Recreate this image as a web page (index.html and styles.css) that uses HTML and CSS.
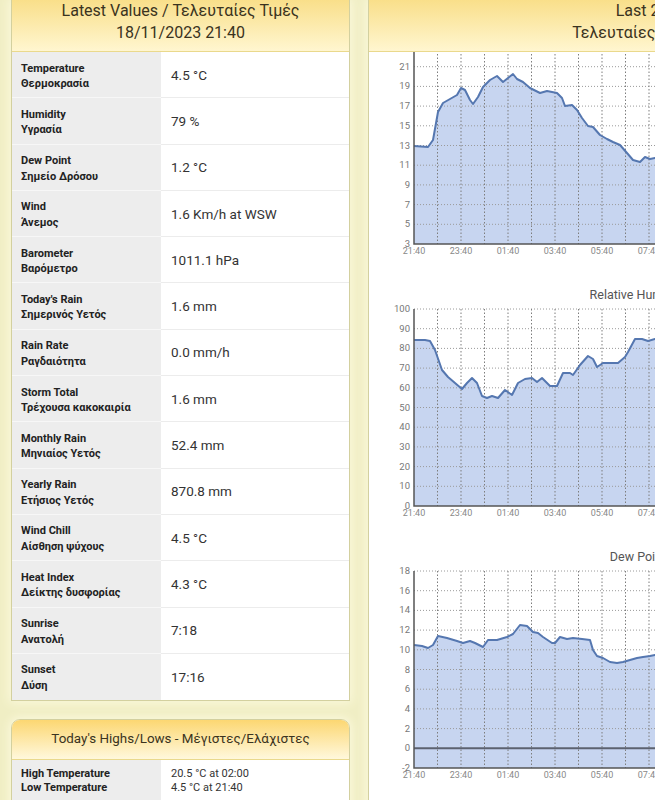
FILE: index.html
```html
<!DOCTYPE html>
<html lang="el">
<head>
<meta charset="utf-8">
<title>Weather</title>
<link rel="stylesheet" href="styles.css">
</head>
<body>
<div class="page">
  <div class="left">
    <section class="panel current">
      <header class="head head-tall">Latest Values / Τελευταίες Τιμές<br>18/11/2023 21:40</header>
      <div class="row"><div class="lbl">Temperature<br>Θερμοκρασία</div><div class="val">4.5 °C</div></div>
      <div class="row"><div class="lbl">Humidity<br>Υγρασία</div><div class="val">79 %</div></div>
      <div class="row"><div class="lbl">Dew Point<br>Σημείο Δρόσου</div><div class="val">1.2 °C</div></div>
      <div class="row"><div class="lbl">Wind<br>Άνεμος</div><div class="val">1.6 Km/h at WSW</div></div>
      <div class="row"><div class="lbl">Barometer<br>Βαρόμετρο</div><div class="val">1011.1 hPa</div></div>
      <div class="row"><div class="lbl">Today's Rain<br>Σημερινός Υετός</div><div class="val">1.6 mm</div></div>
      <div class="row"><div class="lbl">Rain Rate<br>Ραγδαιότητα</div><div class="val">0.0 mm/h</div></div>
      <div class="row"><div class="lbl">Storm Total<br>Τρέχουσα κακοκαιρία</div><div class="val">1.6 mm</div></div>
      <div class="row"><div class="lbl">Monthly Rain<br>Μηνιαίος Υετός</div><div class="val">52.4 mm</div></div>
      <div class="row"><div class="lbl">Yearly Rain<br>Ετήσιος Υετός</div><div class="val">870.8 mm</div></div>
      <div class="row"><div class="lbl">Wind Chill<br>Αίσθηση ψύχους</div><div class="val">4.5 °C</div></div>
      <div class="row"><div class="lbl">Heat Index<br>Δείκτης δυσφορίας</div><div class="val">4.3 °C</div></div>
      <div class="row"><div class="lbl">Sunrise<br>Ανατολή</div><div class="val">7:18</div></div>
      <div class="row last"><div class="lbl">Sunset<br>Δύση</div><div class="val">17:16</div></div>
    </section>
    <section class="panel highs">
      <header class="head head-small">Today's Highs/Lows - Μέγιστες/Ελάχιστες</header>
      <div class="row row-small"><div class="lbl">High Temperature<br>Low Temperature</div><div class="val">20.5 °C at 02:00<br>4.5 °C at 21:40</div></div>
      <div class="row row-small"><div class="lbl">High Humidity<br>Low Humidity</div><div class="val">85 % at 21:50<br>55 % at 01:10</div></div>
    </section>
  </div>

  <section class="panel charts">
    <header class="head head-tall">Last 24h<br>Τελευταίες 24 ώρες</header>
    <div class="chart-list">
      <svg class="chart chart-first" viewBox="0 44 540 218" width="540" height="218">
        <text class="title" x="270" y="29">Temperature</text>
        <polygon class="area" points="46,236 46,138 60,139 65,132 70,104 75,95 82,91 89,87 93,80 97,82 102,92 105,96 110,89 115,79 122,72 129,68 135,74 140,70 145,66 149,71 155,74 162,80 172,85 179,83 189,85 194,90 197,98 204,97 209,102 214,110 220,118 225,119 232,127 239,131 245,134 252,137 259,145 265,152 272,154 277,149 282,151 287,150 300,152 315,150 330,156 345,160 360,158 380,162 400,165 420,170 440,172 460,175 480,178 500,180 516,182 516,236"/>
        <path class="hgrid" d="M46 39H540M46 58.7H540M46 78.4H540M46 98.1H540M46 117.8H540M46 137.5H540M46 157.2H540M46 176.9H540M46 196.6H540M46 216.3H540"/>
        <path class="vgrid" d="M69.5 39V236M93 39V236M116.5 39V236M140 39V236M163.5 39V236M187 39V236M210.5 39V236M234 39V236M257.5 39V236M281 39V236M304.5 39V236M328 39V236M351.5 39V236M375 39V236M398.5 39V236M422 39V236M445.5 39V236M469 39V236M492.5 39V236M516 39V236"/>
        <polyline class="line" points="46,138 60,139 65,132 70,104 75,95 82,91 89,87 93,80 97,82 102,92 105,96 110,89 115,79 122,72 129,68 135,74 140,70 145,66 149,71 155,74 162,80 172,85 179,83 189,85 194,90 197,98 204,97 209,102 214,110 220,118 225,119 232,127 239,131 245,134 252,137 259,145 265,152 272,154 277,149 282,151 287,150 300,152 315,150 330,156 345,160 360,158 380,162 400,165 420,170 440,172 460,175 480,178 500,180 516,182"/>
        <path class="axis" d="M46 39V236H540"/>
        <g class="ylab">
          <text x="42" y="239">3</text><text x="42" y="219.3">5</text><text x="42" y="199.6">7</text><text x="42" y="179.9">9</text><text x="42" y="160.2">11</text><text x="42" y="140.5">13</text><text x="42" y="120.8">15</text><text x="42" y="101.1">17</text><text x="42" y="81.4">19</text><text x="42" y="61.7">21</text><text x="42" y="42">23</text>
        </g>
        <g class="xlab">
          <text x="46" y="246">21:40</text><text x="93" y="246">23:40</text><text x="140" y="246">01:40</text><text x="187" y="246">03:40</text><text x="234" y="246">05:40</text><text x="281" y="246">07:40</text><text x="328" y="246">09:40</text><text x="375" y="246">11:40</text><text x="422" y="246">13:40</text><text x="469" y="246">15:40</text><text x="516" y="246">17:40</text>
        </g>
      </svg>

      <svg class="chart" viewBox="0 0 540 262" width="540" height="262">
        <text class="title" x="270" y="29">Relative Humidity</text>
        <polygon class="area" points="46,236 46,70 57,70 62,71 67,80 74,100 80,107 87,113 94,119 99,113 104,108 109,113 114,126 119,128 124,126 130,128 137,120 144,125 150,113 157,109 164,108 169,112 174,108 182,116 189,116 195,103 202,103 205,105 212,95 220,86 225,89 229,97 235,93 244,93 250,93 257,87 260,82 267,69 274,69 280,71 287,69 300,70 320,72 340,75 360,78 380,80 400,82 420,84 440,86 460,88 480,90 500,92 516,93 516,236"/>
        <path class="hgrid" d="M46 39H540M46 58.7H540M46 78.4H540M46 98.1H540M46 117.8H540M46 137.5H540M46 157.2H540M46 176.9H540M46 196.6H540M46 216.3H540"/>
        <path class="vgrid" d="M69.5 39V236M93 39V236M116.5 39V236M140 39V236M163.5 39V236M187 39V236M210.5 39V236M234 39V236M257.5 39V236M281 39V236M304.5 39V236M328 39V236M351.5 39V236M375 39V236M398.5 39V236M422 39V236M445.5 39V236M469 39V236M492.5 39V236M516 39V236"/>
        <polyline class="line" points="46,70 57,70 62,71 67,80 74,100 80,107 87,113 94,119 99,113 104,108 109,113 114,126 119,128 124,126 130,128 137,120 144,125 150,113 157,109 164,108 169,112 174,108 182,116 189,116 195,103 202,103 205,105 212,95 220,86 225,89 229,97 235,93 244,93 250,93 257,87 260,82 267,69 274,69 280,71 287,69 300,70 320,72 340,75 360,78 380,80 400,82 420,84 440,86 460,88 480,90 500,92 516,93"/>
        <path class="axis" d="M46 39V236H540"/>
        <g class="ylab">
          <text x="42" y="239">0</text><text x="42" y="219.3">10</text><text x="42" y="199.6">20</text><text x="42" y="179.9">30</text><text x="42" y="160.2">40</text><text x="42" y="140.5">50</text><text x="42" y="120.8">60</text><text x="42" y="101.1">70</text><text x="42" y="81.4">80</text><text x="42" y="61.7">90</text><text x="42" y="42">100</text>
        </g>
        <g class="xlab">
          <text x="46" y="246">21:40</text><text x="93" y="246">23:40</text><text x="140" y="246">01:40</text><text x="187" y="246">03:40</text><text x="234" y="246">05:40</text><text x="281" y="246">07:40</text><text x="328" y="246">09:40</text><text x="375" y="246">11:40</text><text x="422" y="246">13:40</text><text x="469" y="246">15:40</text><text x="516" y="246">17:40</text>
        </g>
      </svg>

      <svg class="chart" viewBox="0 0 540 262" width="540" height="262">
        <text class="title" x="270" y="29">Dew Point</text>
        <polygon class="area" points="46,236 46,113 54,114 60,116 65,113 70,104 79,106 89,109 95,111 102,109 107,111 115,115 120,108 129,108 139,105 145,102 152,93 159,94 165,100 170,101 175,105 184,111 187,111 192,105 199,107 205,106 214,107 222,108 225,118 229,124 235,126 242,130 249,131 255,130 262,128 269,126 275,125 282,124 287,123 300,122 320,124 340,126 360,128 380,130 400,133 420,135 440,138 460,140 480,142 500,144 516,145 516,236"/>
        <path class="hgrid" d="M46 39H540M46 58.7H540M46 78.4H540M46 98.1H540M46 117.8H540M46 137.5H540M46 157.2H540M46 176.9H540M46 196.6H540"/>
        <path class="vgrid" d="M69.5 39V236M93 39V236M116.5 39V236M140 39V236M163.5 39V236M187 39V236M210.5 39V236M234 39V236M257.5 39V236M281 39V236M304.5 39V236M328 39V236M351.5 39V236M375 39V236M398.5 39V236M422 39V236M445.5 39V236M469 39V236M492.5 39V236M516 39V236"/>
        <path class="zero" d="M46 216.3H540"/>
        <polyline class="line" points="46,113 54,114 60,116 65,113 70,104 79,106 89,109 95,111 102,109 107,111 115,115 120,108 129,108 139,105 145,102 152,93 159,94 165,100 170,101 175,105 184,111 187,111 192,105 199,107 205,106 214,107 222,108 225,118 229,124 235,126 242,130 249,131 255,130 262,128 269,126 275,125 282,124 287,123 300,122 320,124 340,126 360,128 380,130 400,133 420,135 440,138 460,140 480,142 500,144 516,145"/>
        <path class="axis" d="M46 39V236H540"/>
        <g class="ylab">
          <text x="42" y="239">-2</text><text x="42" y="219.3">0</text><text x="42" y="199.6">2</text><text x="42" y="179.9">4</text><text x="42" y="160.2">6</text><text x="42" y="140.5">8</text><text x="42" y="120.8">10</text><text x="42" y="101.1">12</text><text x="42" y="81.4">14</text><text x="42" y="61.7">16</text><text x="42" y="42">18</text>
        </g>
        <g class="xlab">
          <text x="46" y="246">21:40</text><text x="93" y="246">23:40</text><text x="140" y="246">01:40</text><text x="187" y="246">03:40</text><text x="234" y="246">05:40</text><text x="281" y="246">07:40</text><text x="328" y="246">09:40</text><text x="375" y="246">11:40</text><text x="422" y="246">13:40</text><text x="469" y="246">15:40</text><text x="516" y="246">17:40</text>
        </g>
      </svg>
    </div>
  </section>
</div>
</body>
</html>
```

FILE: styles.css
```css
* { box-sizing: border-box; }
html, body {
  margin: 0;
  padding: 0;
  overflow: hidden;
}
body {
  background: #f0eec4;
  font-family: Roboto, "Noto Sans", "DejaVu Sans", sans-serif;
  color: #333;
}
.page {
  width: 655px;
  height: 800px;
  overflow: hidden;
  display: flex;
  align-items: flex-start;
  gap: 18px;
  padding-left: 11px;
}
.left {
  flex: none;
  width: 339px;
  display: flex;
  flex-direction: column;
  gap: 18px;
}
.panel {
  background: #fff;
  border: 1px solid #d3d09f;
  box-shadow: 0 0 10px 2px #fbf9dc;
}
.current {
  border-top: none;
}
.head {
  text-align: center;
  color: #3a3320;
  border-bottom: 1px solid #ead98c;
}
.head-tall {
  height: 52px;
  padding-top: 0;
  font-size: 16px;
  line-height: 21.5px;
  background: linear-gradient(#f9df8a, #fff6d0);
}
.head-small {
  height: 40px;
  padding-top: 10px;
  font-size: 13.4px;
  line-height: 17px;
  background: linear-gradient(#fcd772, #fff8dc);
}
.highs {
  border-radius: 9px 9px 0 0;
}
.highs .head {
  border-radius: 8px 8px 0 0;
}
.row {
  display: grid;
  grid-template-columns: 149px 1fr;
  height: 46.3px;
}
.lbl {
  background: #ededed;
  padding: 8.5px 9px 0;
  font-size: 11px;
  font-weight: bold;
  line-height: 15.5px;
  color: #222;
  border-bottom: 1px solid #f7f7f7;
}
.val {
  padding-left: 10px;
  display: flex;
  align-items: center;
  font-size: 13.5px;
  color: #333;
  border-bottom: 1px solid #ececec;
}
.row.last .lbl, .row.last .val {
  border-bottom: none;
}
.row-small {
  height: auto;
}
.row-small .lbl {
  padding: 7px 9px 8px;
  font-size: 11px;
  line-height: 14px;
}
.row-small .val {
  display: block;
  padding: 7px 10px 8px;
  font-size: 11px;
  line-height: 14px;
}
.charts {
  flex: none;
  width: 556px;
  border-top: none;
  border-right: none;
}
.chart-list {
  display: flex;
  flex-direction: column;
  padding-bottom: 30px;
}
.chart {
  display: block;
  margin-left: -1px;
}
.chart .title {
  font-size: 12.5px;
  fill: #555;
  text-anchor: middle;
}
.chart .area {
  fill: #c7d5f0;
}
.chart .hgrid {
  fill: none;
  stroke: #9a9a9a;
  stroke-width: 1;
  stroke-dasharray: 1 2;
}
.chart .vgrid {
  fill: none;
  stroke: #7d7d7d;
  stroke-width: 1;
  stroke-dasharray: 1.5 2;
}
.chart .zero {
  fill: none;
  stroke: #5c6270;
  stroke-width: 2;
}
.chart .line {
  fill: none;
  stroke: #5577b0;
  stroke-width: 2;
  stroke-linejoin: round;
}
.chart .axis {
  fill: none;
  stroke: #555;
  stroke-width: 1.5;
}
.chart .ylab text {
  font-size: 9.5px;
  fill: #777;
  text-anchor: end;
}
.chart .xlab text {
  font-size: 9px;
  fill: #888;
  text-anchor: middle;
}
```
